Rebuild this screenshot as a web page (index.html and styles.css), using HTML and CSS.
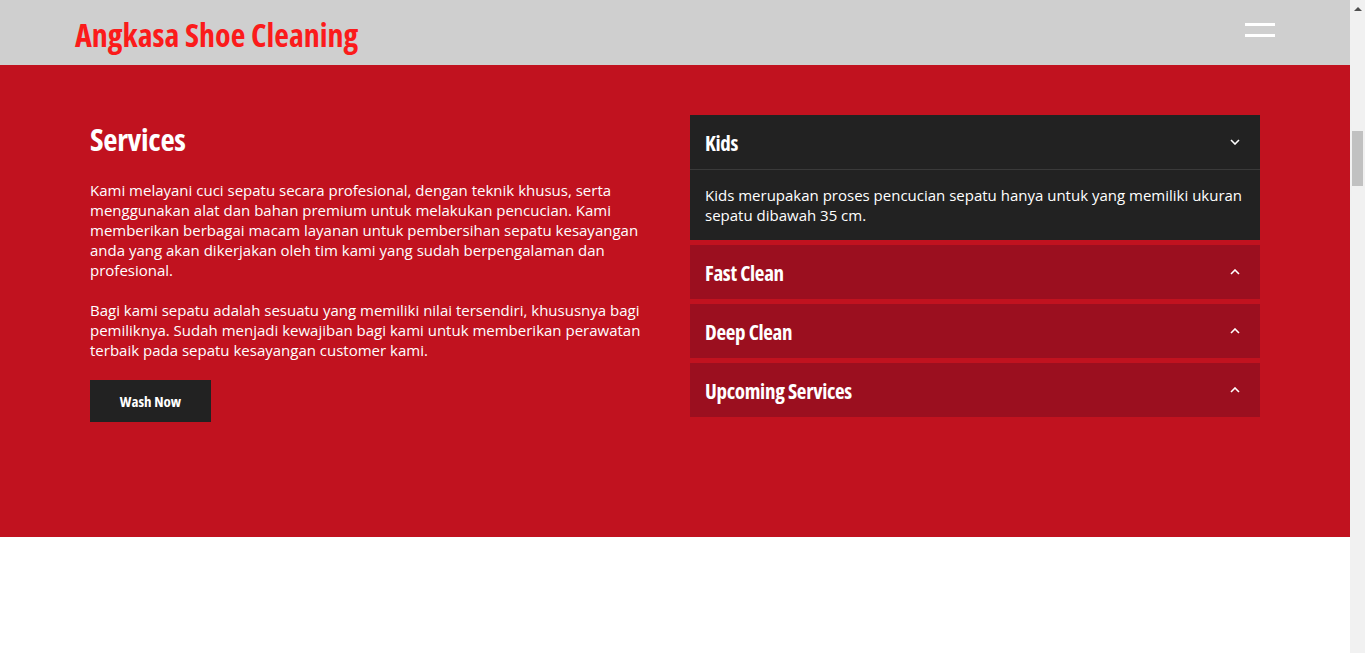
FILE: index.html
```html
<!DOCTYPE html>
<html lang="id">
<head>
<meta charset="utf-8">
<title>Angkasa Shoe Cleaning</title>
<link rel="stylesheet" href="styles.css">
</head>
<body>
<div class="page">
  <header class="topbar">
    <div class="topbar-inner">
      <a class="brand" href="#">Angkasa Shoe Cleaning</a>
      <button class="burger" aria-label="Menu"><span></span><span></span></button>
    </div>
  </header>
  <section class="services">
    <div class="container">
      <div class="col-text">
        <h2 class="section-title">Services</h2>
        <p>Kami melayani cuci sepatu secara profesional, dengan teknik khusus, serta menggunakan alat dan bahan premium untuk melakukan pencucian. Kami memberikan berbagai macam layanan untuk pembersihan sepatu kesayangan anda yang akan dikerjakan oleh tim kami yang sudah berpengalaman dan profesional.</p>
        <p>Bagi kami sepatu adalah sesuatu yang memiliki nilai tersendiri, khususnya bagi pemiliknya. Sudah menjadi kewajiban bagi kami untuk memberikan perawatan terbaik pada sepatu kesayangan customer kami.</p>
        <a class="btn" href="#">Wash Now</a>
      </div>
      <div class="accordion">
        <div class="acc-item open">
          <div class="acc-head"><span>Kids</span>
            <svg class="chev" viewBox="0 0 10 6" width="10" height="6"><path d="M1 1 L5 5 L9 1" fill="none" stroke="#fff" stroke-width="1.6"/></svg>
          </div>
          <div class="acc-body">Kids merupakan proses pencucian sepatu hanya untuk yang memiliki ukuran sepatu dibawah 35 cm.</div>
        </div>
        <div class="acc-item">
          <div class="acc-head"><span>Fast Clean</span>
            <svg class="chev" viewBox="0 0 10 6" width="10" height="6"><path d="M1 5 L5 1 L9 5" fill="none" stroke="#fff" stroke-width="1.6"/></svg>
          </div>
        </div>
        <div class="acc-item">
          <div class="acc-head"><span>Deep Clean</span>
            <svg class="chev" viewBox="0 0 10 6" width="10" height="6"><path d="M1 5 L5 1 L9 5" fill="none" stroke="#fff" stroke-width="1.6"/></svg>
          </div>
        </div>
        <div class="acc-item">
          <div class="acc-head"><span>Upcoming Services</span>
            <svg class="chev" viewBox="0 0 10 6" width="10" height="6"><path d="M1 5 L5 1 L9 5" fill="none" stroke="#fff" stroke-width="1.6"/></svg>
          </div>
        </div>
      </div>
    </div>
  </section>
  <section class="after"></section>
</div>
<div class="scrollbar" aria-hidden="true">
  <svg class="sb-arrow" viewBox="0 0 8 4" width="8" height="4"><path d="M0 4 L4 0 L8 4 Z" fill="#505050"/></svg>
  <div class="sb-thumb"></div>
</div>
</body>
</html>
```
FILE: styles.css
```css
* { box-sizing: border-box; }
html, body { margin: 0; padding: 0; overflow: hidden; }
body {
  font-family: "Open Sans", "Liberation Sans", sans-serif;
  background: #fff;
  color: #fff;
  height: 653px;
}
.page {
  width: calc(100% - 15px);
  height: 653px;
  overflow: hidden;
  display: flex;
  flex-direction: column;
}
.topbar {
  background: #cfcfcf;
  height: 65px;
  flex: none;
}
.topbar-inner {
  width: 1200px;
  margin: 0 auto;
  height: 100%;
  display: flex;
  align-items: center;
  justify-content: space-between;
}
.brand, .section-title, .btn, .acc-head {
  font-family: "Open Sans", sans-serif;
  font-stretch: condensed;
}
.brand {
  font-weight: 700;
  font-size: 32px;
  color: #fb1b1b;
  text-decoration: none;
  margin-top: 3px;
}
.burger {
  background: none;
  border: 0;
  padding: 0;
  width: 30px;
  display: flex;
  flex-direction: column;
  gap: 8px;
  margin-bottom: 6px;
}
.burger span {
  display: block;
  height: 3px;
  width: 30px;
  background: #fff;
}
.services {
  background: #c1121f;
  padding: 50px 0 115px;
  flex: none;
}
.container {
  width: 1170px;
  margin: 0 auto;
  display: grid;
  grid-template-columns: 1fr 1fr;
  column-gap: 30px;
}
.col-text { padding-top: 6px; padding-right: 15px; }
.section-title {
  font-weight: 700;
  font-size: 31px;
  letter-spacing: -0.3px;
  line-height: 36px;
  margin: 0 0 23px;
}
.col-text p {
  font-size: 15px;
  line-height: 20px;
  margin: 0 0 20px;
}
.btn {
  display: inline-block;
  background: #222;
  color: #fff;
  text-decoration: none;
  font-weight: 700;
  font-size: 15px;
  height: 42px;
  line-height: 43px;
  width: 121px;
  text-align: center;
}
.accordion {
  display: flex;
  flex-direction: column;
  gap: 5px;
}
.acc-item { background: #9b0f1f; }
.acc-item.open { background: #222; }
.acc-head {
  height: 54px;
  display: flex;
  align-items: center;
  justify-content: space-between;
  padding: 2px 20px 0 15px;
  font-weight: 700;
  font-size: 21px;
  letter-spacing: -0.3px;
}
.acc-item.open .acc-head { border-bottom: 1px solid #3a3a3a; height: 55px; }
.chev { display: block; margin-top: -2px; }
.acc-body {
  font-size: 15px;
  line-height: 20px;
  padding: 15px;
}
.after { flex: 1; }
.scrollbar {
  position: fixed;
  top: 0;
  right: 0;
  width: 15px;
  height: 100%;
  background: #f1f1f1;
}
.sb-arrow {
  position: absolute;
  top: 7px;
  left: 4px;
}
.sb-thumb {
  position: absolute;
  top: 131px;
  left: 2px;
  width: 11px;
  height: 55px;
  background: #c1c1c1;
}
```
